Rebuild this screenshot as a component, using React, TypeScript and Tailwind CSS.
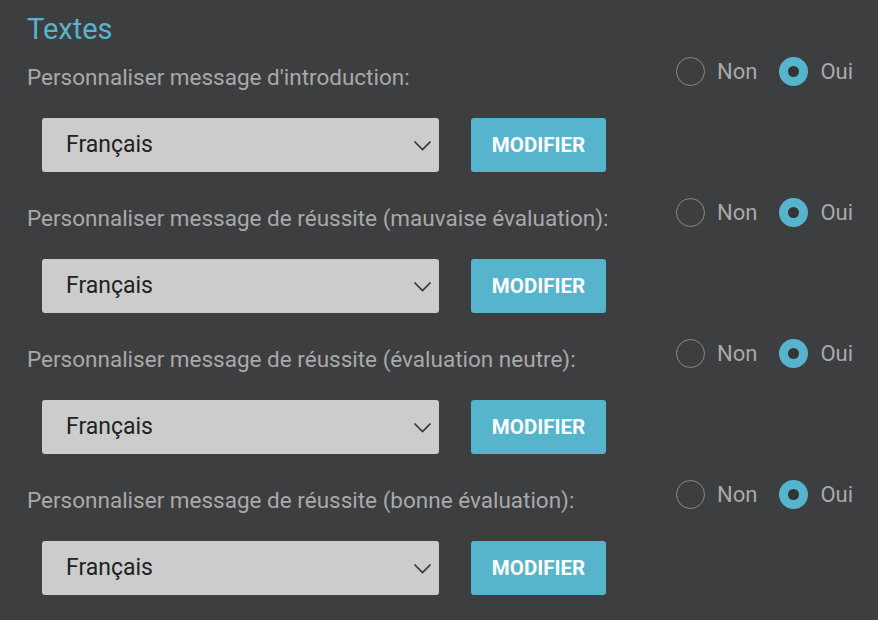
import { useState } from 'react'

const rows = [
  { id: 'intro', label: "Personnaliser message d'introduction:" },
  { id: 'bad', label: 'Personnaliser message de réussite (mauvaise évaluation):' },
  { id: 'neutral', label: 'Personnaliser message de réussite (évaluation neutre):' },
  { id: 'good', label: 'Personnaliser message de réussite (bonne évaluation):' },
]

function Radio({ checked, label, onClick }: { checked: boolean; label: string; onClick: () => void }) {
  return (
    <button onClick={onClick} className="flex items-center gap-[12px]">
      {checked ? (
        <span className="flex h-[29px] w-[29px] items-center justify-center rounded-full bg-[#56b5cc]">
          <span className="h-[11px] w-[11px] rounded-full bg-[#333436]" />
        </span>
      ) : (
        <span className="h-[29px] w-[29px] rounded-full border border-[#8a8a8a]" />
      )}
      <span className="text-[22px] leading-[29px] text-[#a9a9a9]">{label}</span>
    </button>
  )
}

function TextRow({ label }: { label: string }) {
  const [on, setOn] = useState(true)
  const [lang, setLang] = useState('fr')
  return (
    <div className="mb-[26px]">
      <div className="flex items-start justify-between">
        <p className="pt-[6px] text-[22.5px] leading-[28px] text-[#a9a9a9]">{label}</p>
        <div className="flex items-center gap-[22px]">
          <Radio checked={!on} label="Non" onClick={() => setOn(false)} />
          <Radio checked={on} label="Oui" onClick={() => setOn(true)} />
        </div>
      </div>
      <div className="mt-[27px] flex items-center gap-[32px] pl-[15px]">
        <div className="relative h-[54px] w-[397px]">
          <select
            value={lang}
            onChange={(e) => setLang(e.target.value)}
            className="h-full w-full appearance-none rounded-[3px] bg-[#cccccc] pl-[24px] text-[23px] text-[#222] outline-none"
          >
            <option value="fr">Français</option>
            <option value="en">English</option>
          </select>
          <svg className="pointer-events-none absolute right-[7px] top-[22px] h-[11px] w-[19px]" viewBox="0 0 19 11" fill="none">
            <path d="M1.5 1.5 L9.5 9.5 L17.5 1.5" stroke="#333" strokeWidth="1.6" />
          </svg>
        </div>
        <button className="h-[54px] w-[135px] rounded-[3px] bg-[#56b5cc] text-[20.5px] font-bold text-white">
          MODIFIER
        </button>
      </div>
    </div>
  )
}

export default function App() {
  return (
    <div className="min-h-[620px] bg-[#3d3e40] pl-[27px] pr-[25px] pt-[12px]" style={{ fontFamily: 'Roboto, sans-serif' }}>
      <h2 className="mb-[11px] text-[29px] leading-[34px] text-[#56b5cc]">Textes</h2>
      {rows.map((r) => (
        <TextRow key={r.id} label={r.label} />
      ))}
    </div>
  )
}
